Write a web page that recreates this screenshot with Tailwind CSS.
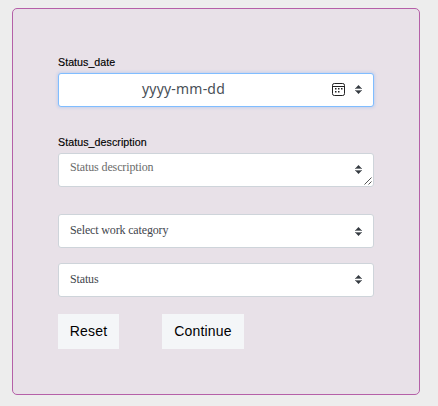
<!DOCTYPE html>
<html lang="en">
<head>
<meta charset="utf-8">
<title>Status form</title>
<script src="https://cdn.jsdelivr.net/npm/@tailwindcss/browser@4"></script>
</head>
<body class="h-[406px] overflow-hidden bg-[#ededed] pt-2 pl-3">
<svg class="hidden"><symbol id="sort" viewBox="0 0 7 9"><path fill="#343a40" d="M3.5 0 .7 3h5.6zM3.5 9 .7 6h5.6z"/><path fill="#343a40" fill-opacity=".65" d="M0 3h7v1H0zM0 5h7v1H0z"/></symbol></svg>
<form class="flex h-[387px] w-[408px] flex-col items-start rounded-[5px] border border-[#b560a8] bg-[#e8e1e8] px-[45px] pt-[46px]">
  <label class="h-[18px] font-['Liberation_Sans',sans-serif] text-[10.67px] leading-[15px] tracking-[0.03px] text-black [-webkit-text-stroke:0.15px_#000]">Status_date</label>
  <div class="flex h-[34px] w-[316px] shrink-0 items-center rounded-[3px] border border-[#80bdff] bg-white pr-[11px] pl-[83px] shadow-[0_0_3px_1px_rgba(0,123,255,0.15)]">
    <span class="flex-1 pb-[2px] font-['Noto_Sans',sans-serif] text-[14px] leading-[30px] tracking-[0.2px] text-[#495057]">yyyy-mm-dd</span>
    <svg class="mr-[10px] mb-px h-[13px] w-[13px]" viewBox="0 0 13 13" fill="none"><rect x=".5" y=".5" width="12" height="12" rx="1.8" stroke="#222"/><path d="M.5 3.5h12" stroke="#222"/><path d="M6 5h1.5v1.5H6zM9 5h1.5v1.5H9zM3 5h1.5v1.5H3zM3 8h1.5v1.5H3zM6 8h1.5v1.5H6z" fill="#222"/></svg>
    <svg class="mb-px h-[9px] w-[7px]"><use href="#sort"/></svg>
  </div>
  <label class="mt-[28px] h-[18px] font-['Liberation_Sans',sans-serif] text-[10.67px] leading-[15px] tracking-[0.06px] text-black [-webkit-text-stroke:0.15px_#000]">Status_description</label>
  <div class="relative flex h-[34px] w-[316px] shrink-0 items-center justify-between rounded-[3px] border border-[#ced4da] bg-white pr-[11px] pl-[11px]">
    <span class="pb-[6px] font-['Liberation_Serif',serif] text-[12px] leading-[18px] tracking-[-0.12px] text-[#6b6b6b]">Status description</span>
    <svg class="mb-px h-[9px] w-[7px]"><use href="#sort"/></svg>
    <svg class="absolute right-px bottom-px h-2 w-2" viewBox="0 0 8 8" fill="none" stroke="#555"><path d="M.5 7.5l7-7M4.5 7.5l3-3"/></svg>
  </div>
  <div class="mt-[27px] flex h-[34px] w-[316px] shrink-0 items-center justify-between rounded-[3px] border border-[#ced4da] bg-white px-[11px]">
    <span class="pb-[2px] font-['Liberation_Serif',serif] text-[12px] leading-[18px] tracking-[-0.15px] text-[#3f464d]">Select work category</span>
    <svg class="mt-px h-[9px] w-[7px]"><use href="#sort"/></svg>
  </div>
  <div class="mt-[15px] flex h-[34px] w-[316px] shrink-0 items-center justify-between rounded-[3px] border border-[#ced4da] bg-white px-[11px]">
    <span class="pb-[2px] font-['Liberation_Serif',serif] text-[12px] leading-[18px] tracking-[-0.15px] text-[#3f464d]">Status</span>
    <svg class="mb-px h-[9px] w-[7px]"><use href="#sort"/></svg>
  </div>
  <div class="mt-[17px] flex gap-[43px] font-['Liberation_Sans',sans-serif] text-[14px] tracking-[0.2px] text-black">
    <button type="button" class="h-[35px] w-[61px] bg-[#f4f6f8]">Reset</button>
    <button type="button" class="h-[35px] w-[82px] bg-[#f4f6f8]">Continue</button>
  </div>
</form>
</body>
</html>
